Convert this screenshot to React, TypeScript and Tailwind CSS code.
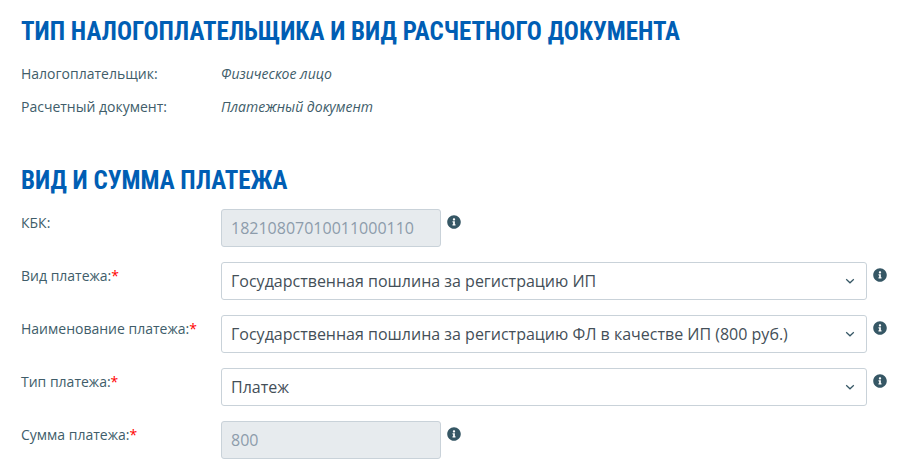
import type { ReactNode } from "react";
import { FaInfoCircle } from "react-icons/fa";

function SectionTitle({ children }: { children: ReactNode }) {
  return (
    <h2 className="font-['Roboto_Condensed','Liberation_Sans_Narrow','Roboto',sans-serif] text-[25px] leading-9 font-bold uppercase text-[#005eb4]">
      {children}
    </h2>
  );
}

function InfoButton({ label }: { label: string }) {
  return (
    <button type="button" aria-label={label} className="mt-1.5 shrink-0 text-[#365765]">
      <FaInfoCircle size={14} />
    </button>
  );
}

function Field({
  id,
  label,
  required = false,
  children,
}: {
  id: string;
  label: string;
  required?: boolean;
  children: ReactNode;
}) {
  return (
    <div className="flex items-start">
      <label htmlFor={id} className="w-[200px] shrink-0 pt-1 leading-5">
        {label}
        {required && <span className="text-[#ff0000]">*</span>}
      </label>
      <div className="flex min-w-0 flex-1 items-start gap-1.5">
        {children}
        <InfoButton label={`Справка: ${label}`} />
      </div>
    </div>
  );
}

function LockedInput({ id, value }: { id: string; value: string }) {
  return (
    <input
      id={id}
      type="text"
      value={value}
      disabled
      className="h-[38px] w-[220px] rounded-[3px] border border-[#c9d2d9] bg-[#e7ebee] px-[9px] text-base text-[#8d9cab]"
    />
  );
}

function SelectBox({ id, option }: { id: string; option: string }) {
  return (
    <div className="relative min-w-0 flex-1">
      <select
        id={id}
        className="block h-[38px] w-full appearance-none rounded-[3px] border border-[#c9d2d9] bg-white pr-8 pl-[9px] text-base text-[#444f58]"
      >
        <option>{option}</option>
      </select>
      <svg
        viewBox="0 0 10 6"
        aria-hidden="true"
        className="pointer-events-none absolute top-4 right-3 h-1.5 w-2.5 fill-none stroke-[#365765]"
        strokeWidth="1.2"
      >
        <path d="M1.2 1.2L5 4.8l3.8-3.6" />
      </svg>
    </div>
  );
}

export default function App() {
  return (
    <main className="bg-white pt-3.5 pr-[18px] pb-4 pl-[21px] font-['Open_Sans','Noto_Sans',sans-serif] text-sm text-[#405d6a]">
      <section>
        <SectionTitle>Тип налогоплательщика и вид расчетного документа</SectionTitle>
        <dl className="mt-3.5 grid grid-cols-[200px_1fr] gap-y-[13px] leading-5">
          <dt>Налогоплательщик:</dt>
          <dd className="italic">Физическое лицо</dd>
          <dt>Расчетный документ:</dt>
          <dd className="italic">Платежный документ</dd>
        </dl>
      </section>
      <section className="mt-[46px]">
        <SectionTitle>Вид и сумма платежа</SectionTitle>
        <form className="mt-2.5 flex flex-col gap-[15px]">
          <Field id="kbk" label="КБК:">
            <LockedInput id="kbk" value="18210807010011000110" />
          </Field>
          <Field id="kind" label="Вид платежа:" required>
            <SelectBox id="kind" option="Государственная пошлина за регистрацию ИП" />
          </Field>
          <Field id="name" label="Наименование платежа:" required>
            <SelectBox
              id="name"
              option="Государственная пошлина за регистрацию ФЛ в качестве ИП (800 руб.)"
            />
          </Field>
          <Field id="type" label="Тип платежа:" required>
            <SelectBox id="type" option="Платеж" />
          </Field>
          <Field id="sum" label="Сумма платежа:" required>
            <LockedInput id="sum" value="800" />
          </Field>
        </form>
      </section>
    </main>
  );
}
